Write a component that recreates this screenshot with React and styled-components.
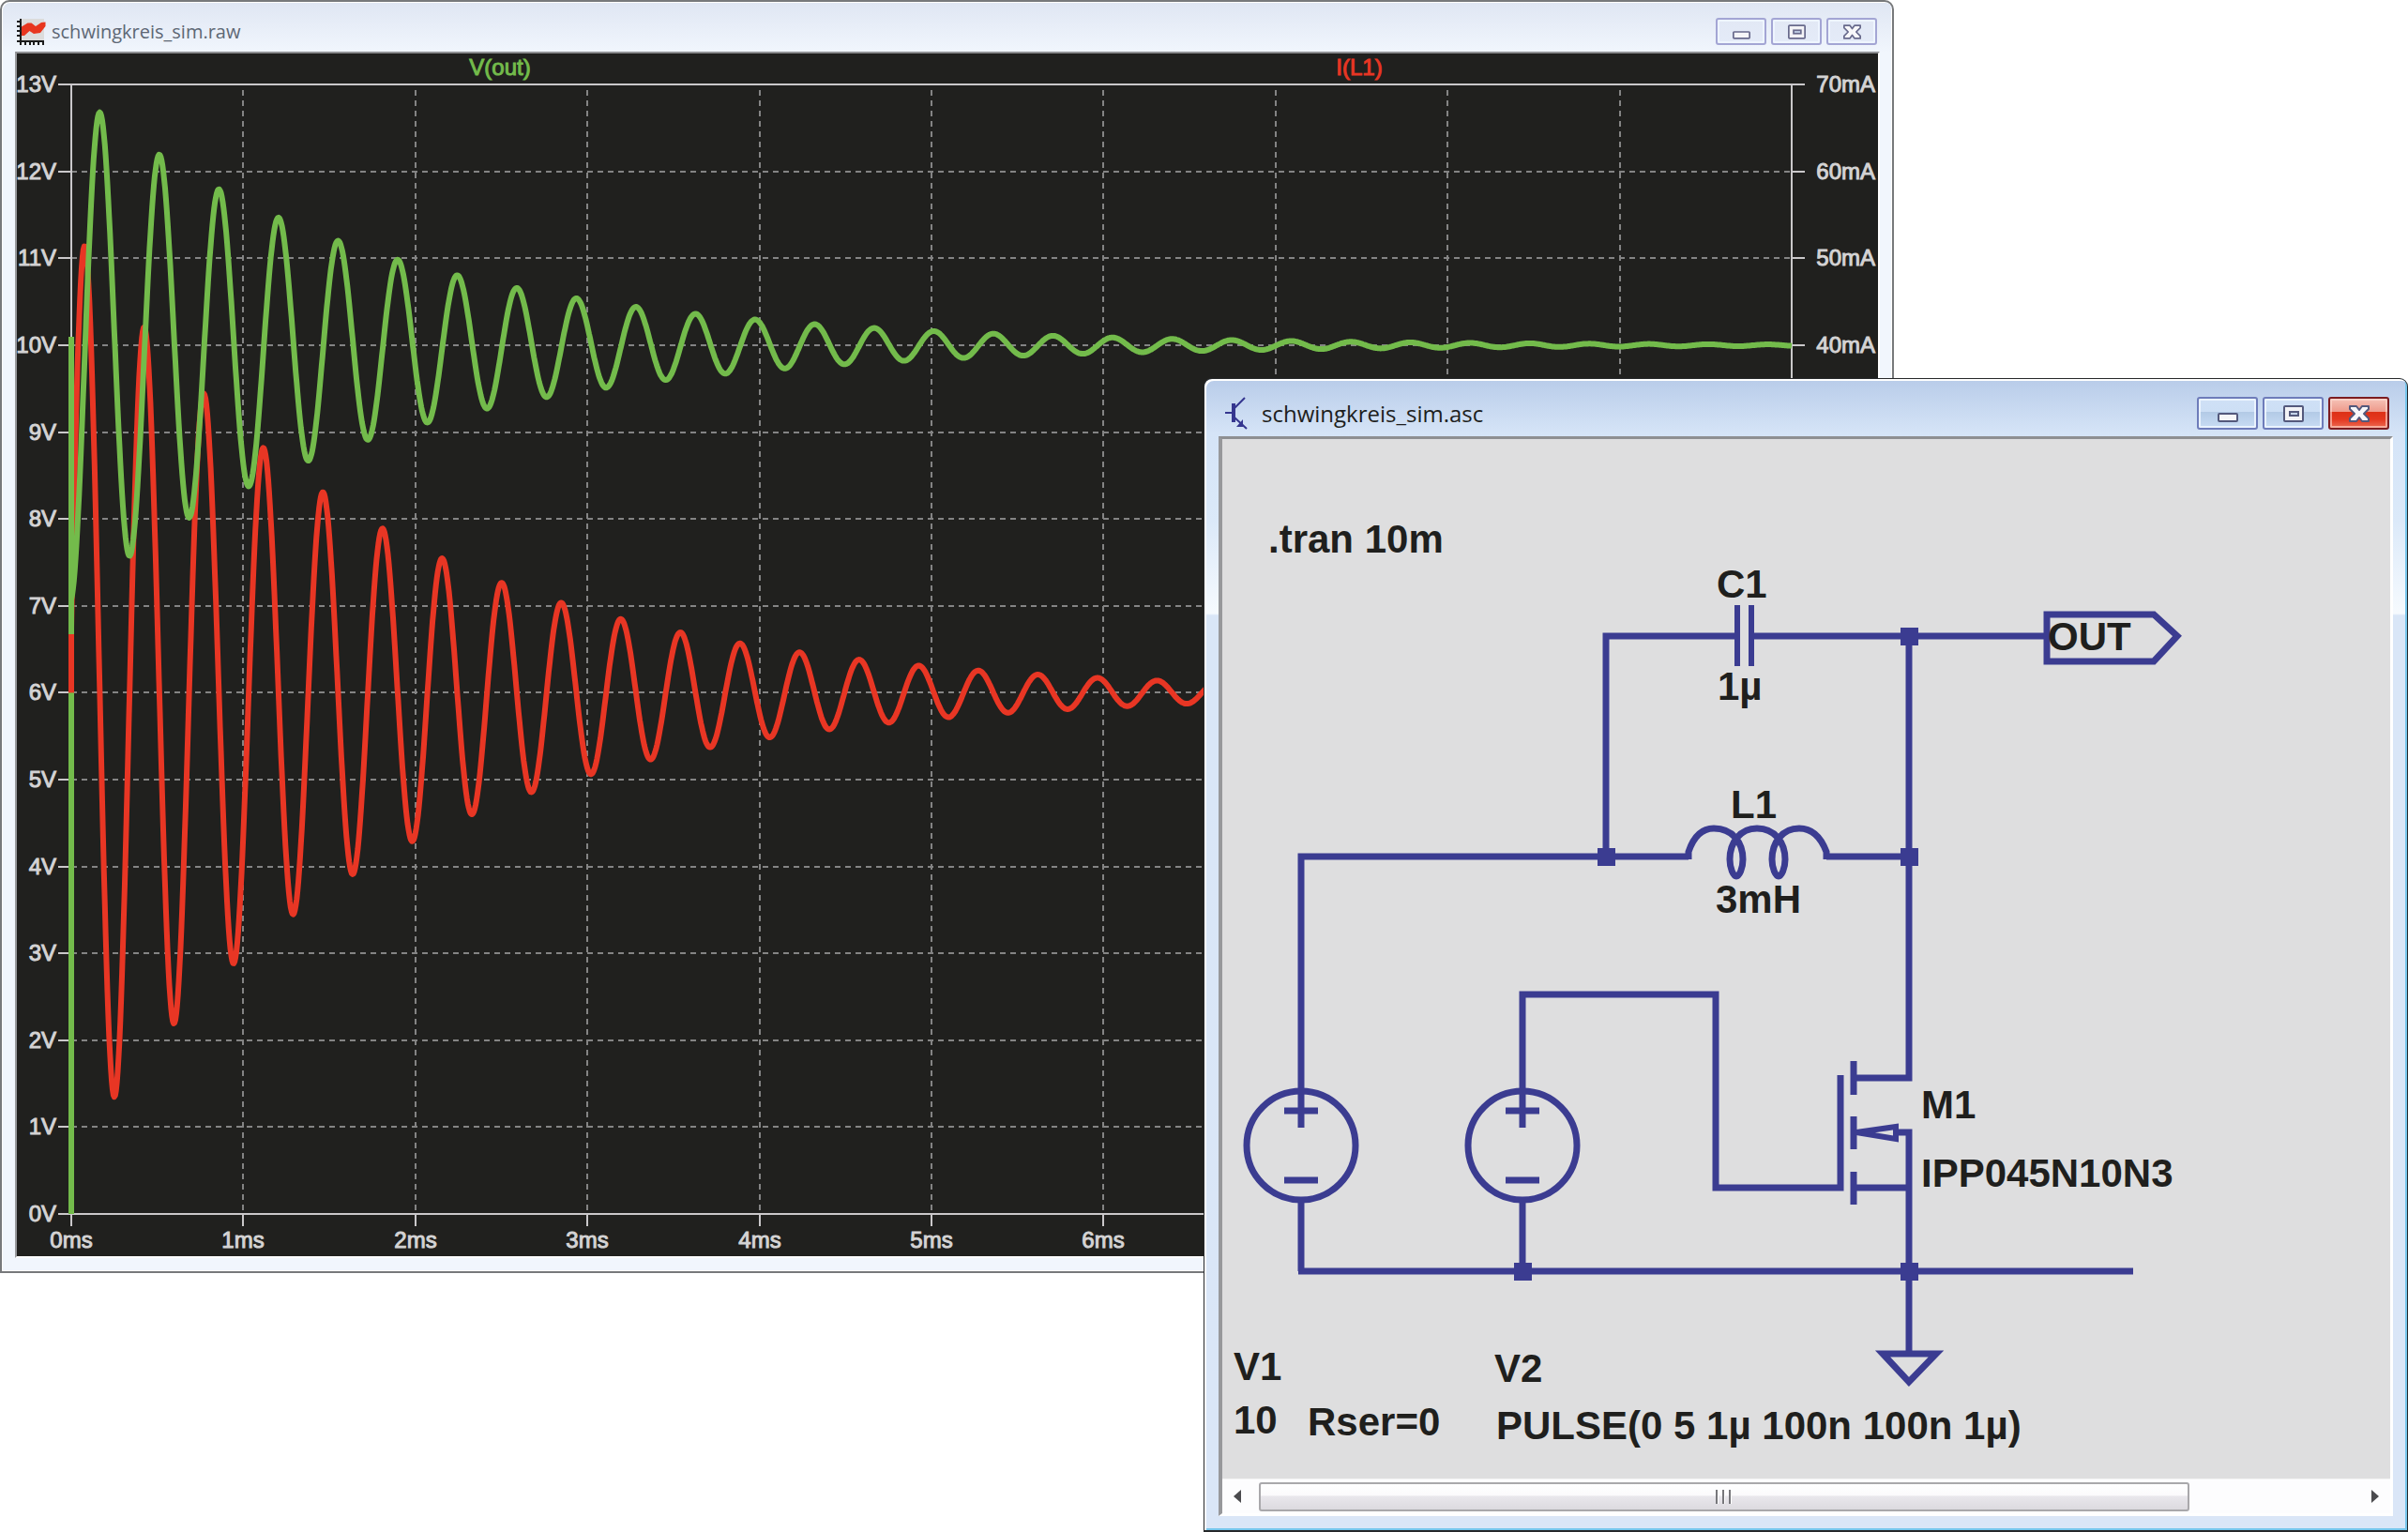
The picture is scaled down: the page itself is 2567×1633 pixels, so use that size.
import React from "react";
import styled, { createGlobalStyle } from "styled-components";

const GlobalStyle = createGlobalStyle`
  * { box-sizing: border-box; }
  body { margin: 0; background: #fff; font-family: "Open Sans", "Noto Sans", sans-serif; }
`;

const Desktop = styled.main`
  display: grid;
  grid-template-columns: 1283fr 736fr 548fr;
  align-items: start;
  overflow: hidden;
`;

const Window = styled.section`
  display: flex;
  flex-direction: column;
  min-width: 0;
  grid-row: 1;
`;

const PlotWindow = styled(Window)`
  grid-column: 1 / 3;
  padding: 0 13px 14px 14px;
  border: 2px solid #77797b;
  border-radius: 10px 10px 0 0;
  background: linear-gradient(#dfe6f3, #f1f6fd 54px, #f1f6fd);
  box-shadow: inset 1px 1px 0 #fff, inset -1px -1px 0 #fff;
`;

const SchematicWindow = styled(Window)`
  grid-column: 2 / 4;
  margin-top: 403px;
  padding: 0 15px 15px 15px;
  border: 1px solid #26282a;
  border-bottom-width: 2px;
  border-radius: 9px 9px 0 0;
  background: linear-gradient(#b8cce9, #d5e4f7 58px, #dbe9f9 150px, #f6fafe 250px, #d9e6f7 252px, #dae6f7);
  box-shadow: inset 2px 2px 0 #fff, inset -2px -2px 0 #76c6ec;
`;

const TitleBar = styled.header`
  display: flex;
  align-items: center;
  gap: ${(p) => (p.$active ? 15 : 6)}px;
  height: ${(p) => (p.$active ? 61 : 53)}px;
  padding: ${(p) => (p.$active ? "12px 4px 0 7px" : "10px 3px 0 2px")};
`;

const Title = styled.h1`
  flex: 1;
  margin: 0;
  font-size: ${(p) => (p.$active ? 24 : 20)}px;
  line-height: 32px;
  font-weight: 400;
  color: ${(p) => (p.$active ? "#1d1e20" : "#5d6774")};
`;

const Controls = styled.div`
  display: flex;
  gap: 5px;
`;

const ControlButton = styled.button`
  display: flex;
  align-items: center;
  justify-content: center;
  width: ${(p) => (p.$active ? 65 : 54)}px;
  height: ${(p) => (p.$active ? 35 : 29)}px;
  padding: 0;
  border: 2px solid ${(p) => (p.$close ? "#7c1c20" : p.$active ? "#6e7cba" : "#a3a5d4")};
  border-radius: 3px;
  background: ${(p) =>
    p.$close
      ? "linear-gradient(#f6c3b8, #ee9a8b 44%, #dd3016 46%, #e4371f 70%, #ec6a52)"
      : p.$active
        ? "linear-gradient(#cfe0f6, #cddff5 44%, #b3cae6 46%, #c8dcf4)"
        : "linear-gradient(#e2e8f5, #e4ebf8)"};
  box-shadow: inset 0 0 0 2px
    ${(p) => (p.$close ? "rgba(255,220,210,.6)" : "rgba(240,247,255,.85)")};
`;

const Glyph = styled.svg`
  display: block;
  width: ${(p) => (p.$active ? 22 : 19)}px;
  height: ${(p) => (p.$active ? 18 : 16)}px;
`;

const Pane = styled.div`
  border-style: solid;
  border-width: ${(p) => (p.$active ? "3px 3px 3px 4px" : "2px")};
  border-color: #8e8f92 #fff #fff #97989b;
`;

const Drawing = styled.svg`
  display: block;
  width: 100%;
  height: auto;
  background: ${(p) => p.$paper};
`;

const AxisText = styled.text`
  font-family: "Liberation Sans", Arial, sans-serif;
  font-size: 24px;
  fill: ${(p) => p.$ink || "#d4d3d4"};
  stroke: ${(p) => p.$ink || "#d4d3d4"};
  stroke-width: 1px;
`;

const PartText = styled.text`
  font-family: "Liberation Sans", Arial, sans-serif;
  font-size: 42px;
  font-weight: 700;
  fill: #1f1f1d;
  white-space: pre;
`;

const ScrollBar = styled.div`
  display: flex;
  align-items: center;
  height: 37px;
  background: #fdfdfe;
  border-top: 1px solid #f4f4f4;
`;

const ScrollArrow = styled.button`
  display: flex;
  align-items: center;
  justify-content: ${(p) => (p.$end ? "flex-end" : "flex-start")};
  width: 39px;
  height: 30px;
  padding: 0 12px;
  border: 0;
  background: transparent;
`;

const Track = styled.div`
  flex: 1;
`;

const Thumb = styled.div`
  display: flex;
  align-items: center;
  justify-content: center;
  gap: 4px;
  width: 85%;
  height: 31px;
  border: 2px solid #a9a8ab;
  border-radius: 3px;
  background: linear-gradient(#fff, #fbfafc 44%, #e9e7ec 48%, #dcdadf);
`;

const Grip = styled.span`
  width: 3px;
  height: 15px;
  border-left: 2px solid #77777b;
  border-right: 1px solid #fff;
`;

function WindowControls({ active }) {
  const ink = active ? "#54597c" : "#686a8c";
  return (
    <Controls>
      <ControlButton type="button" aria-label="Minimize" $active={active}>
        <Glyph $active={active} viewBox="0 0 22 18">
          <rect x="1" y="9" width="20" height="8" rx="1" fill="#f6f6f8" stroke={ink} strokeWidth="2" />
        </Glyph>
      </ControlButton>
      <ControlButton type="button" aria-label="Maximize" $active={active}>
        <Glyph $active={active} viewBox="0 0 22 18">
          <rect x="1" y="1" width="20" height="16" rx="1" fill="#f3f3f6" stroke={ink} strokeWidth="2" />
          <rect x="7" y="7" width="9" height="4" fill="#c5d4ea" stroke={ink} strokeWidth="2" />
        </Glyph>
      </ControlButton>
      <ControlButton type="button" aria-label="Close" $active={active} $close={active}>
        <Glyph $active={active} viewBox="0 0 22 18">
          <path
            d="M1 1H8L11 5L14 1H21V4L16 9L21 14V17H14L11 13L8 17H1V14L6 9L1 4Z"
            fill="#f8f8fa"
            stroke={ink}
            strokeWidth="2"
            strokeLinejoin="round"
          />
        </Glyph>
      </ControlButton>
    </Controls>
  );
}

function PlotIcon() {
  return (
    <svg width="31" height="28" viewBox="0 0 31 28" aria-hidden="true">
      <rect x="5" y="0" width="24" height="24" fill="#dcdcdc" />
      <path d="M4.500 8.700L11.500 4.500H15.500L20 8L26 4L30.500 3.500V8L25 15L18 16L13.500 13L8 18H4Z" fill="#e8361f" />
      <path
        d="M4 0V28M0 3H4M0 8H4M0 13H4M0 18H4M0 24H29M9 24V28M14 24V28M18 24V28M23 24V28M28 24V28"
        stroke="#1c1c1c"
        strokeWidth="2"
        fill="none"
      />
    </svg>
  );
}

function TransistorIcon() {
  return (
    <svg width="24" height="35" viewBox="0 0 24 35" aria-hidden="true">
      <g stroke="#35368f" fill="none">
        <path d="M0 17H8" strokeWidth="2" />
        <path d="M9 7V27" strokeWidth="4" />
        <path d="M10 12L21 1M10 22L23 34" strokeWidth="2" />
      </g>
      <path d="M19 24V32H12Z" fill="#35368f" />
    </svg>
  );
}

/* Plot geometry: time runs along x, volts along y. */
const LEFT = 58;
const RIGHT = 1892;
const TOP = 33;
const BOTTOM = 1237;
const xOf = (ms) => LEFT + ms * 183.4;
const yOf = (volts) => BOTTOM - volts * 92.6;
const range = (n) => Array.from({ length: n }, (_, i) => i);

function ringing(base, amplitude, peak, period) {
  return range(2001)
    .map((i) => {
      const t = i / 200;
      const v = base + amplitude * Math.exp(-t / 1.73) * Math.cos((2 * Math.PI * (t - peak)) / period);
      return `${i ? "L" : "M"}${xOf(t).toFixed(1)} ${yOf(v).toFixed(1)}`;
    })
    .join("");
}

const voltage = ringing(10, 2.95, 0.167, 0.3463);
const current = ringing(6, 5.38, 0.079, 0.3463);

const GREEN = "#73bb4b";
const RED = "#e83624";

function Plot() {
  return (
    <Drawing $paper="#20201e" viewBox="0 0 1984 1282" role="img" aria-label="V(out) and I(L1) over time">
      <g stroke="#848484" strokeWidth="2" strokeDasharray="6 5">
        {range(12).map((i) => (
          <path key={i} d={`M${LEFT} ${Math.round(yOf(i + 1))}H${RIGHT}`} />
        ))}
        {range(9).map((i) => (
          <path key={i} d={`M${Math.round(xOf(i + 1))} ${TOP + 6}V${BOTTOM}`} />
        ))}
      </g>
      <g stroke="#cac8ca" strokeWidth="2" fill="none">
        <path d={`M${LEFT} ${BOTTOM}V${TOP}H${RIGHT}V${BOTTOM}Z`} />
        {range(14).map((i) => (
          <path key={i} d={`M44 ${Math.round(yOf(i))}H${LEFT}M${RIGHT} ${Math.round(yOf(i))}H1906`} />
        ))}
        {range(11).map((i) => (
          <path key={i} d={`M${Math.round(xOf(i))} ${BOTTOM}V1250`} />
        ))}
      </g>
      <g fill="none" strokeWidth="6" strokeLinejoin="round">
        <path d={current} stroke={RED} />
        <path d={voltage} stroke={GREEN} />
        <path d={`M${LEFT} ${BOTTOM}V302`} stroke={GREEN} />
        <path d={`M${LEFT} ${yOf(6)}V619`} stroke={RED} />
      </g>
      <AxisText x="515" y="23" textAnchor="middle" $ink={GREEN}>V(out)</AxisText>
      <AxisText x="1431" y="23" textAnchor="middle" $ink={RED}>I(L1)</AxisText>
      {range(14).map((i) => (
        <AxisText key={i} x="42" y={Math.round(yOf(i)) + 8} textAnchor="end">{`${i}V`}</AxisText>
      ))}
      {range(14).map((i) => (
        <AxisText key={i} x="1981" y={Math.round(yOf(i)) + 8} textAnchor="end">{`${i * 10 - 60}mA`}</AxisText>
      ))}
      {range(11).map((i) => (
        <AxisText key={i} x={Math.round(xOf(i))} y="1273" textAnchor="middle">{`${i}ms`}</AxisText>
      ))}
    </Drawing>
  );
}

const labels = [
  [49, 121, ".tran 10m"],
  [527, 169, "C1"],
  [528, 278, "1µ"],
  [880, 225, "OUT"],
  [542, 404, "L1"],
  [526, 505, "3mH"],
  [745, 724, "M1"],
  [745, 797, "IPP045N10N3"],
  [12, 1003, "V1"],
  [12, 1060, "10"],
  [91, 1062, "Rser=0"],
  [290, 1005, "V2"],
  [292, 1066, "PULSE(0 5 1µ 100n 100n 1µ)"],
];

const nodes = [[732, 210], [732, 445], [409, 445], [320, 887], [732, 887]];

function Source({ x }) {
  return (
    <g>
      <circle cx={x} cy="753" r="58" />
      <path d={`M${x - 18} 716H${x + 18}M${x - 18} 790H${x + 18}M${x} 811V887`} />
    </g>
  );
}

function Schematic() {
  return (
    <Drawing $paper="#dededf" viewBox="0 0 1245 1108" role="img" aria-label="Resonant circuit schematic">
      <g fill="none" stroke="#3b3c91" strokeWidth="7">
        <path d="M84 734V445H497M409 445V210H549M564 210H879M732 210V681H673M644 445H732" />
        <path d="M549 177V242M564 177V242" strokeWidth="6" />
        <path d="M879 187H993L1018 210L993 237H879Z" />
        <path d="M497 448V440C503 422 513 415 524 415C544 415 555 430 555 448C555 458 551 466 548 466C545 466 541 458 541 448C541 430 552 415 570 415C589 415 600 430 600 448C600 458 596 466 593 466C590 466 586 458 586 448C586 430 597 415 615 415C628 415 638 424 644 440V448" />
        <Source x={84} />
        <Source x={320} />
        <path d="M320 734V592H526V798H659V678" />
        <path d="M673 663V699M673 722V757M673 781V816" />
        <path d="M673 798H732M717 739H732V975" />
        <path d="M676 739L718 733V746Z" strokeWidth="6" />
        <path d="M81 887H971" />
        <path d="M704 975H761L732 1005Z" />
      </g>
      {nodes.map(([x, y]) => (
        <rect key={`${x}-${y}`} x={x - 9} y={y - 9} width="19" height="19" fill="#3b3c91" />
      ))}
      {labels.map(([x, y, text]) => (
        <PartText key={text} x={x} y={y}>{text}</PartText>
      ))}
    </Drawing>
  );
}

export default function App() {
  return (
    <>
      <GlobalStyle />
      <Desktop>
        <PlotWindow>
          <TitleBar>
            <PlotIcon />
            <Title>schwingkreis_sim.raw</Title>
            <WindowControls />
          </TitleBar>
          <Pane>
            <Plot />
          </Pane>
        </PlotWindow>
        <SchematicWindow>
          <TitleBar $active>
            <TransistorIcon />
            <Title $active>schwingkreis_sim.asc</Title>
            <WindowControls active />
          </TitleBar>
          <Pane $active>
            <Schematic />
            <ScrollBar>
              <ScrollArrow type="button" aria-label="Scroll left">
                <svg width="8" height="14" viewBox="0 0 8 14"><path d="M8 0V14L0 7Z" fill="#4b4b4e" /></svg>
              </ScrollArrow>
              <Track>
                <Thumb>
                  <Grip />
                  <Grip />
                  <Grip />
                </Thumb>
              </Track>
              <ScrollArrow type="button" aria-label="Scroll right" $end>
                <svg width="8" height="14" viewBox="0 0 8 14"><path d="M0 0V14L8 7Z" fill="#4b4b4e" /></svg>
              </ScrollArrow>
            </ScrollBar>
          </Pane>
        </SchematicWindow>
      </Desktop>
    </>
  );
}
